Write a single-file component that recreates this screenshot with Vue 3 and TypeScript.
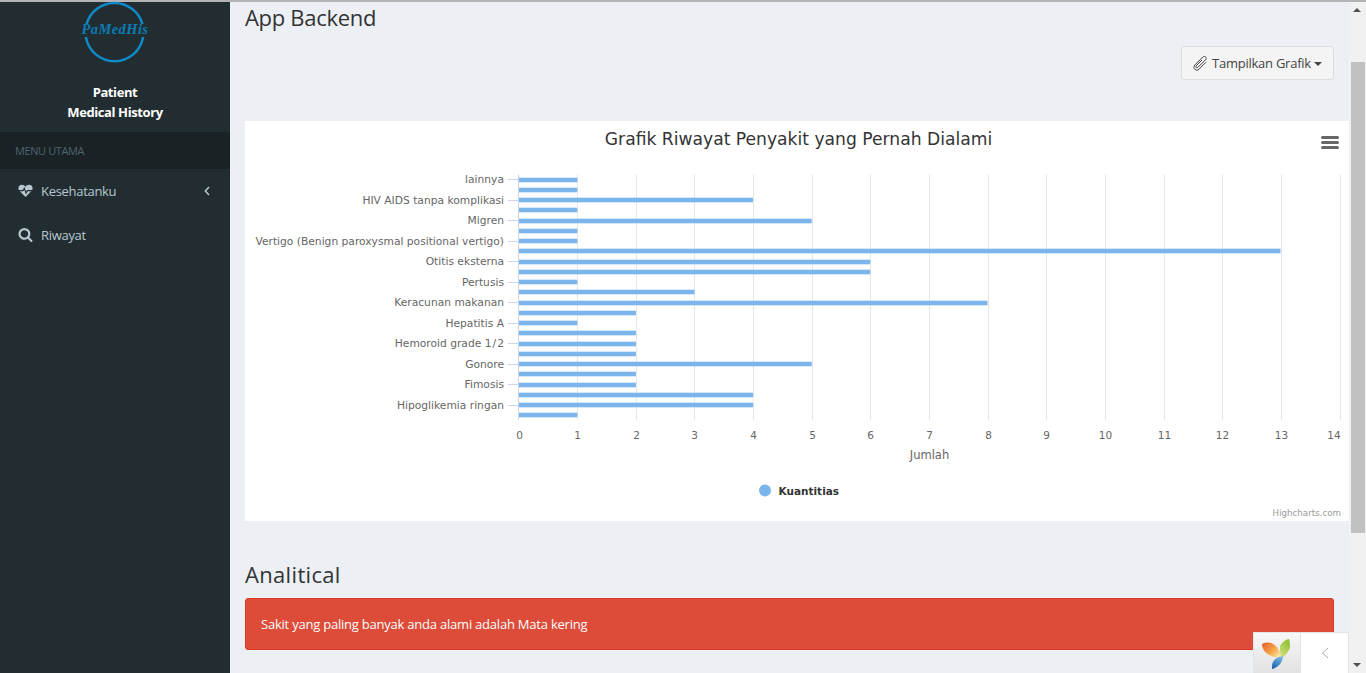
<template>
  <div class="page">
    <div class="topline"></div>
    <div class="shell">
      <aside class="sidebar">
        <div class="brand">
          <svg class="logo" width="80" height="66" viewBox="0 0 80 66">
            <path d="M11.600 24 A29 29 0 0 1 67.400 24" class="ring" />
            <path d="M10.900 37 A29 29 0 0 0 68.100 37" class="ring" />
            <text x="40" y="34" text-anchor="middle" class="logo-text">PaMedHis</text>
          </svg>
          <div class="brand-name">Patient<br />Medical History</div>
        </div>
        <div class="menu-head">MENU UTAMA</div>
        <nav class="menu">
          <a class="menu-item">
            <svg class="menu-icon" width="15" height="14" viewBox="0 0 15 14">
              <path d="M7.500 13 L1.300 6.800 C-.8 4.200 .8 .8 3.900 .8 C5.500 .8 6.800 1.700 7.500 2.800 C8.200 1.700 9.500 .8 11.100 .8 C14.200 .8 15.800 4.200 13.700 6.800 Z" fill="#b8c7ce" />
              <path d="M0 6.600 H5 L6.300 4.400 L8 9 L9.400 6.600 H15" fill="none" stroke="#222d32" stroke-width="1.100" />
            </svg>
            <span class="menu-label">Kesehatanku</span>
            <svg class="chev" width="6" height="10" viewBox="0 0 6 10">
              <path d="M5 1 L1.300 5 L5 9" fill="none" stroke="#b8c7ce" stroke-width="1.500" />
            </svg>
          </a>
          <a class="menu-item">
            <svg class="menu-icon" width="14" height="14" viewBox="0 0 1664 1664">
              <path fill="#b8c7ce" d="M1152 704q0-185-131.500-316.500t-316.500-131.500-316.500 131.500-131.500 316.500 131.500 316.500 316.500 131.500 316.500-131.500 131.500-316.500zm512 832q0 52-38 90t-90 38q-54 0-90-38l-343-342q-179 124-399 124-143 0-273.500-55.500t-225-150-150-225-55.500-273.500 55.500-273.500 150-225 225-150 273.500-55.500 273.500 55.500 225 150 150 225 55.500 273.500q0 220-124 399l343 343q37 37 37 90z" />
            </svg>
            <span class="menu-label">Riwayat</span>
          </a>
        </nav>
      </aside>

      <main class="content">
        <h1 class="title title-first">App Backend</h1>
        <div class="toolbar">
          <button class="btn">
            <svg class="clip" width="16" height="15" viewBox="0 0 16 15">
              <path d="M9 4 L3.200 9.800 C2.200 10.900 3.700 12.500 4.800 11.500 L12.500 3.800 C14.600 1.500 11.500 -.7 9.800 1 L2 8.800 C-1 12 3 16 6 13.200 L13 6.200" fill="none" stroke="#444" stroke-width="1" />
            </svg>
            <span>Tampilkan Grafik</span>
            <i class="caret"></i>
          </button>
        </div>

        <section class="chart">
          <svg width="1104" height="400" viewBox="0 0 1104 400">
            <text x="553.500" y="24" text-anchor="middle" class="chart-title">Grafik Riwayat Penyakit yang Pernah Dialami</text>
            <g class="burger">
              <rect x="1076" y="15" width="18" height="3" rx="1.500" />
              <rect x="1076" y="20" width="18" height="3" rx="1.500" />
              <rect x="1076" y="25" width="18" height="3" rx="1.500" />
            </g>

            <line v-for="n in 14" :key="'g' + n" :x1="gridX(n)" :x2="gridX(n)" y1="53.500" y2="299" class="grid" />

            <line v-for="(v, i) in values" :key="'t' + i" x1="263" x2="273.500" :y1="tickY(i)" :y2="tickY(i)" v-show="i % 2 === 0" class="axis" />
            <line x1="273.500" x2="273.500" y1="53.500" y2="299" class="axis" />

            <rect v-for="(v, i) in values" :key="'b' + i" x="274" :y="barY(i)" :width="barW(v)" height="4.600" class="bar" />

            <template v-for="(label, i) in labels" :key="'l' + i">
              <text x="259" :y="labelY(i)" text-anchor="end" class="axis-text cat">{{ label }}</text>
            </template>

            <text v-for="n in 15" :key="'x' + n" :x="tickLabelX(n - 1)" y="318" text-anchor="middle" class="axis-text">{{ n - 1 }}</text>

            <text x="684.500" y="338" text-anchor="middle" class="axis-title">Jumlah</text>

            <circle cx="520" cy="369.500" r="6" class="bar" />
            <text x="533.500" y="374" class="legend">Kuantitias</text>
            <text x="1096" y="395" text-anchor="end" class="credit">Highcharts.com</text>
          </svg>
        </section>

        <h2 class="title title-second">Analitical</h2>
        <div class="alert">Sakit yang paling banyak anda alami adalah Mata kering</div>

        <div class="yii">
          <div class="yii-logo">
            <svg width="30" height="32" viewBox="0 0 30 32">
              <defs>
                <linearGradient id="petalA" x1="0" y1="0" x2="1" y2="0.700">
                  <stop offset="0" stop-color="#e2592b" />
                  <stop offset="0.600" stop-color="#f6a649" />
                  <stop offset="1" stop-color="#fbe7a6" />
                </linearGradient>
                <linearGradient id="petalB" x1="0.700" y1="0" x2="0.300" y2="1">
                  <stop offset="0" stop-color="#8cbf2f" />
                  <stop offset="1" stop-color="#cfe07a" />
                </linearGradient>
                <linearGradient id="petalC" x1="0.700" y1="0" x2="0.300" y2="1">
                  <stop offset="0" stop-color="#7db8e6" />
                  <stop offset="1" stop-color="#1566b4" />
                </linearGradient>
              </defs>
              <path d="M0 5 C8 1 16 5 20 19 C10 19 0 14 0 5 Z" fill="url(#petalA)" />
              <path d="M27 0 C22 1 17 6 18 10 C18 14 19 17 20 19 C24 16 29 10 28 6 C28 4 27.500 2 27 0 Z" fill="url(#petalB)" />
              <path d="M21 17 C14 18 10 22 10 27 C10 28 10 29 10 30 C15 29 21 24 21 17 Z" fill="url(#petalC)" />
            </svg>
          </div>
          <div class="yii-toggle">
            <svg width="8" height="12" viewBox="0 0 8 12">
              <path d="M7 1 L1.500 6 L7 11" fill="none" stroke="#a8a8a8" stroke-width="1" />
            </svg>
          </div>
        </div>
      </main>

      <div class="scrollbar">
        <div class="arrow arrow-up"></div>
        <div class="thumb"></div>
        <div class="arrow arrow-down"></div>
      </div>
    </div>
  </div>
</template>

<script setup lang="ts">
const unit = 58.65
const values: number[] = [1, 1, 4, 1, 5, 1, 1, 13, 6, 6, 1, 3, 8, 2, 1, 2, 2, 2, 5, 2, 2, 4, 4, 1]
const labels: string[] = [
  'lainnya', 'HIV AIDS tanpa komplikasi', 'Migren', 'Vertigo (Benign paroxysmal positional vertigo)',
  'Otitis eksterna', 'Pertusis', 'Keracunan makanan', 'Hepatitis A',
  'Hemoroid grade 1\u200a/\u200a2', 'Gonore', 'Fimosis', 'Hipoglikemia ringan',
]

const gridX = (n: number) => Math.round(273.5 + n * unit) + 0.5
const tickLabelX = (n: number) => (n === 14 ? 1089 : gridX(n))
const barW = (v: number) => v * 58.6 - 0.3
const barY = (i: number) => Math.round(56.5 + i * 10.25) - 0.3
const tickY = (i: number) => Math.round(58 + i * 10.25) + 0.5
const labelY = (i: number) => 62 + i * 20.5
</script>

<style>
html, body { margin: 0; height: 100%; overflow: hidden; }
</style>

<style scoped>
.page {
  width: 1366px;
  height: 673px;
  display: flex;
  flex-direction: column;
  overflow: hidden;
  font-family: "Open Sans", "Noto Sans", sans-serif;
}
.topline { height: 2px; background: #b3b3b3; flex: none; }
.shell { flex: 1; display: flex; min-height: 0; }

.sidebar { width: 230px; flex: none; background: #222d32; }
.brand { height: 130px; display: flex; flex-direction: column; align-items: center; }
.logo { display: block; margin-top: -2px; }
.ring { fill: none; stroke: #1089c9; stroke-width: 2.5; }
.logo-text {
  font-family: "Liberation Serif", serif;
  font-style: italic;
  font-weight: 700;
  font-size: 14.500px;
  letter-spacing: .4px;
  fill: #0b7bb3;
}
.brand-name {
  margin-top: 16px;
  font-size: 13px;
  line-height: 20px;
  font-weight: 700;
  letter-spacing: -.4px;
  color: #fff;
  text-align: center;
}
.menu-head {
  height: 37px;
  line-height: 37px;
  padding-left: 15px;
  background: #1a2226;
  color: #4b646f;
  font-size: 11px;
  letter-spacing: -.4px;
}
.menu { display: flex; flex-direction: column; }
.menu-item {
  height: 44px;
  display: flex;
  align-items: center;
  padding: 0 20px 0 18px;
  color: #b8c7ce;
  font-size: 13px;
  letter-spacing: -.3px;
}
.menu-icon { flex: none; width: 15px; }
.menu-label { margin-left: 8px; flex: 1; }
.chev { flex: none; }

.content {
  position: relative;
  flex: 1;
  min-width: 0;
  background: #ecf0f5;
  padding-left: 15px;
  overflow: hidden;
}
.title {
  margin: 0;
  font-size: 22px;
  font-weight: 400;
  line-height: 32px;
  color: #333;
}
.title-first { margin-top: -1px; letter-spacing: -.3px; }
.toolbar { display: flex; justify-content: flex-end; margin: 13px 15px 0 0; height: 75px; }
.btn {
  height: 34px;
  width: 153px;
  display: flex;
  align-items: center;
  justify-content: center;
  gap: 3px;
  padding: 0;
  background: #f4f4f4;
  border: 1px solid #ddd;
  border-radius: 3px;
  color: #444;
  font: inherit;
  font-size: 13px;
  letter-spacing: -.25px;
}
.caret {
  margin-top: 2px;
  width: 0;
  height: 0;
  border-top: 4px solid #444;
  border-left: 4px solid transparent;
  border-right: 4px solid transparent;
}
.chart { width: 1104px; height: 400px; background: #fff; }
.chart svg { display: block; font-family: "DejaVu Sans", sans-serif; }
.chart-title { font-size: 17.150px; fill: #333; }
.burger rect { fill: #666; }
.grid { stroke: #e6e6e6; stroke-width: 1; }
.axis { stroke: #ccd6eb; stroke-width: 1; }
.bar { fill: #7cb5ec; }
.axis-text { font-size: 10.500px; fill: #666; }
.cat { font-size: 10.700px; }
.axis-title { font-size: 11.500px; fill: #666; }
.legend { font-size: 10.500px; font-weight: 700; fill: #333; }
.credit { font-size: 8.700px; fill: #999; }

.title-second { margin-top: 37px; letter-spacing: .33px; }
.alert {
  margin: 8px 15px 0 0;
  height: 52px;
  box-sizing: border-box;
  line-height: 50px;
  padding-left: 15px;
  background: #dd4b39;
  border: 1px solid #d73925;
  border-radius: 3px;
  color: #fff;
  font-size: 13px;
  letter-spacing: -.22px;
}

.yii {
  position: absolute;
  right: 0;
  bottom: 0;
  width: 96px;
  height: 41px;
  box-sizing: border-box;
  display: flex;
  border: 1px solid #e4e4e4;
  border-bottom: 0;
  background: #fff;
}
.yii-logo {
  width: 47px;
  display: flex;
  align-items: center;
  justify-content: center;
  padding-top: 3px;
  box-sizing: border-box;
  background: linear-gradient(#f7f7f7, #e2e2e2);
  border-right: 1px solid #e4e4e4;
}
.yii-toggle { flex: 1; display: flex; align-items: center; justify-content: center; }

.scrollbar {
  width: 17px;
  flex: none;
  background: #f1f1f1;
  display: flex;
  flex-direction: column;
  position: relative;
}
.thumb { width: 14px; height: 471px; margin: 60px 0 0 2px; background: #c1c1c1; }
.arrow { position: absolute; left: 4px; width: 0; height: 0; border-left: 4px solid transparent; border-right: 4px solid transparent; }
.arrow-up { top: 6px; border-bottom: 4px solid #505050; }
.arrow-down { bottom: 6px; border-top: 4px solid #505050; }
</style>
